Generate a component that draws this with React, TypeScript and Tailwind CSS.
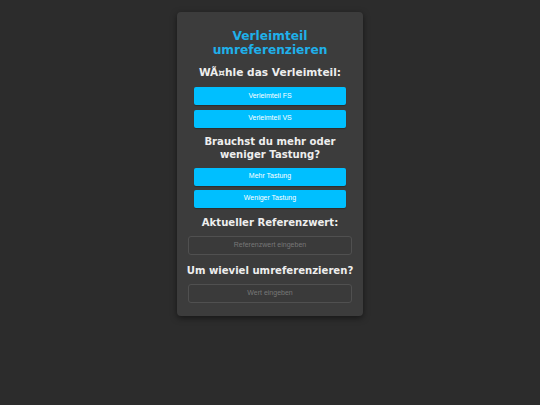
import React from "react";

export default function App() {
  const heading = "text-[#eeeeee] font-bold text-[10.1px] leading-[13px] text-center whitespace-nowrap";
  const btn = "w-[152px] h-[18px] bg-[#00bfff] rounded-[2px] text-white text-[7px] flex items-center justify-center shadow-[0_1px_1px_rgba(0,0,0,0.25)]";
  const input = "w-[164px] h-[19px] rounded-[3px] border border-[#505050] bg-[#3a3a3a] text-[7px] text-[#777] flex items-center justify-center";
  const sans = { fontFamily: '"Liberation Sans", Arial, sans-serif' };
  return (
    <div className="w-[540px] h-[405px] bg-[#2c2c2c] flex justify-center" style={{ fontFamily: '"DejaVu Sans", sans-serif' }}>
      <div className="mt-[12px] w-[186px] h-[304px] bg-[#3c3c3c] rounded-[4px] shadow-[0_2px_6px_rgba(0,0,0,0.5)] flex flex-col items-center pt-[17px]">
        <div className="text-[#1fb0ea] font-bold text-[12.2px] leading-[14px] text-center">
          Verleimteil
          <br />
          umreferenzieren
        </div>
        <div className={heading + " mt-[9px] text-[10.6px]"}>WÃ¤hle das Verleimteil:</div>
        <div className="mt-[8px] flex flex-col gap-[4.5px]" style={sans}>
          <div className={btn}>Verleimteil FS</div>
          <div className={btn}>Verleimteil VS</div>
        </div>
        <div className={heading + " mt-[7px]"}>
          Brauchst du mehr oder
          <br />
          weniger Tastung?
        </div>
        <div className="mt-[7px] flex flex-col gap-[4px]" style={sans}>
          <div className={btn}>Mehr Tastung</div>
          <div className={btn}>Weniger Tastung</div>
        </div>
        <div className={heading + " mt-[8px]"}>Aktueller Referenzwert:</div>
        <div className={input + " mt-[7px]"} style={sans}>Referenzwert eingeben</div>
        <div className={heading + " mt-[9px]"}>Um wieviel umreferenzieren?</div>
        <div className={input + " mt-[7px]"} style={sans}>Wert eingeben</div>
      </div>
    </div>
  );
}
